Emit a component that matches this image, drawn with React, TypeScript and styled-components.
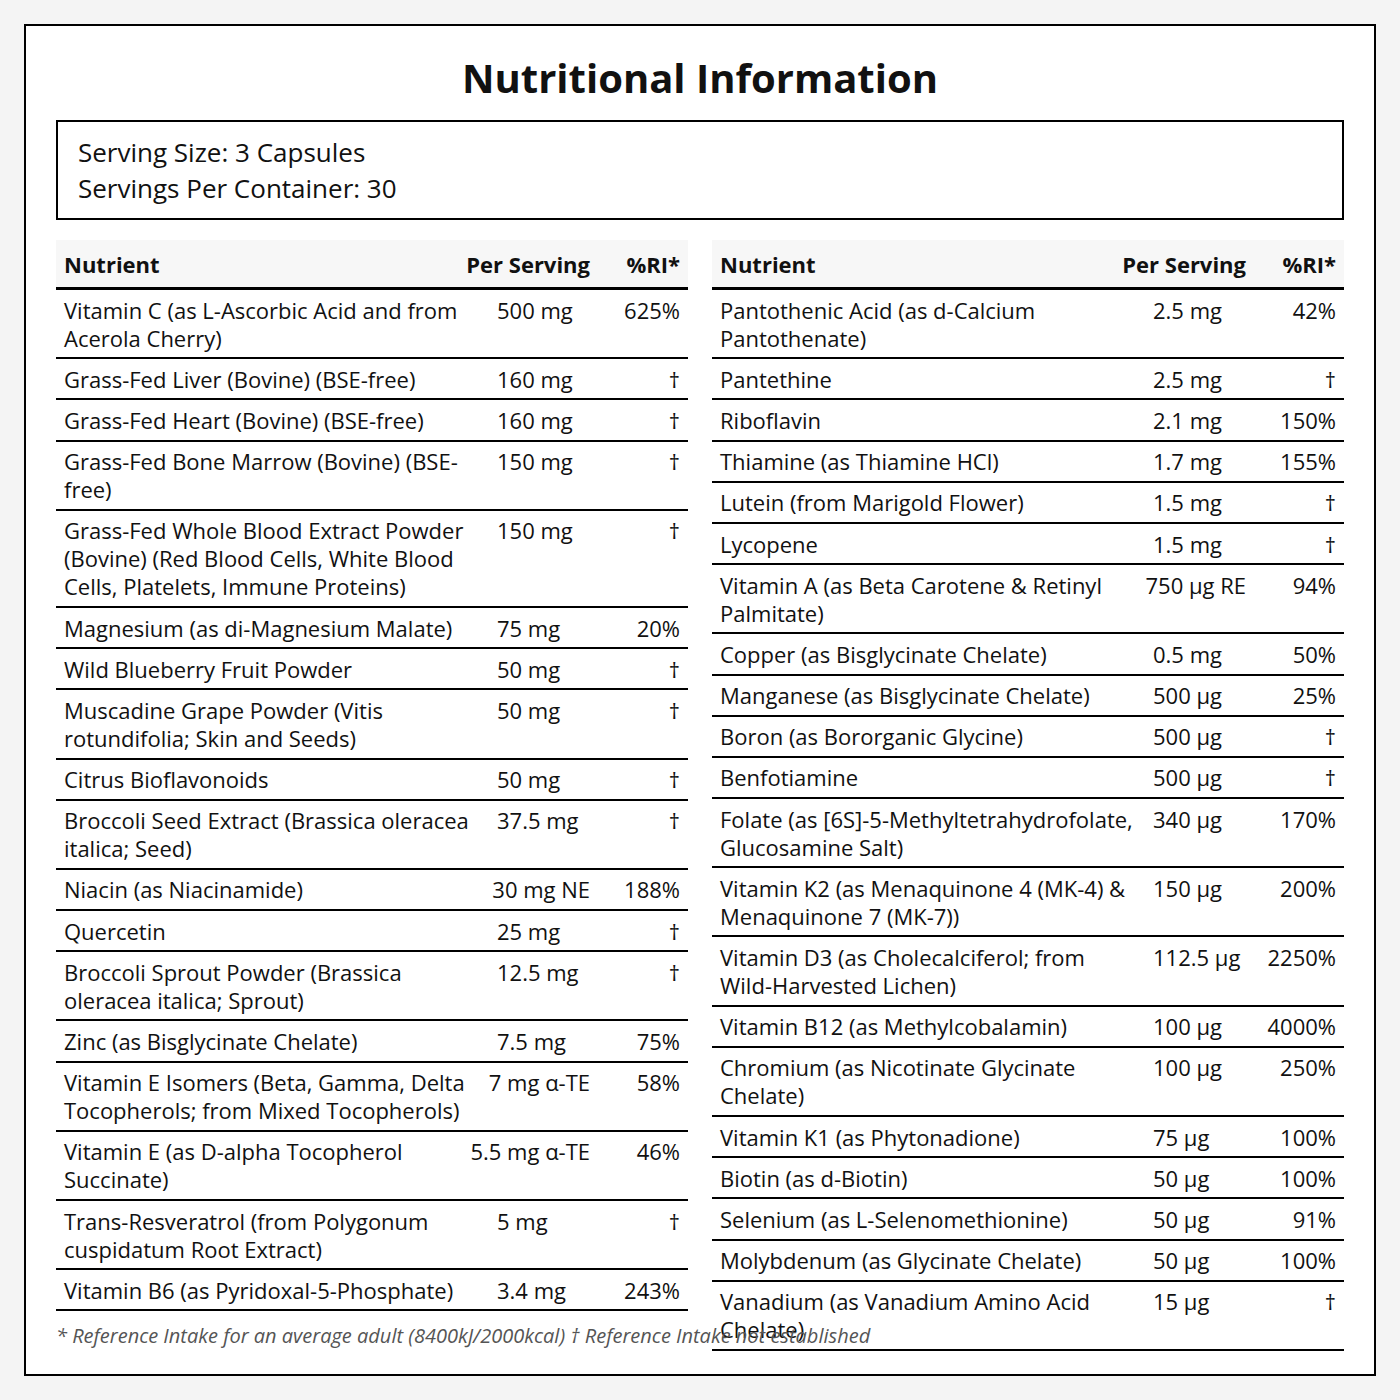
import React from 'react';
import styled, {createGlobalStyle} from 'styled-components';

const GlobalStyle = createGlobalStyle`
  html, body {
    margin: 0;
    padding: 0;
  }
  body {
    background: #f4f4f4;
    font-family: "Open Sans", "Noto Sans", sans-serif;
    color: #111;
  }
`

const Page = styled.div`
  padding: 24px;
`

const Card = styled.div`
  box-sizing: border-box;
  height: 1352px;
  background: #fff;
  border: 2px solid #000;
  padding: 30px;
`

const Title = styled.h1`
  margin: 0 0 20px;
  text-align: center;
  font-size: 40px;
  line-height: 44px;
  font-weight: 700;
`

const ServingBox = styled.div`
  border: 2px solid #000;
  padding: 12px 20px;
  font-size: 26px;
  line-height: 36px;
`

const Tables = styled.div`
  display: grid;
  grid-template-columns: 1fr 1fr;
  column-gap: 24px;
  align-items: start;
  margin-top: 20px;
  height: 1072px;
`

const Table = styled.div`
  font-size: 22px;
  line-height: 28px;
`

const HeadRow = styled.div`
  display: flex;
  align-items: flex-start;
  background: #f7f7f7;
  border-bottom: 3px solid #000;
  padding: 10px 0 9px;
  font-weight: 700;
`

const Row = styled.div`
  display: flex;
  align-items: flex-start;
  padding: 5.6px 0;
  border-bottom: 2px solid #000;
`

const NameCell = styled.div`
  flex: 1;
  min-width: 0;
  padding: 0 8px;
`

const AmountCell = styled.div`
  flex: none;
  min-width: 93px;
  padding: 0 8px;
  white-space: nowrap;
`

const RiCell = styled.div`
  flex: none;
  box-sizing: border-box;
  width: 90px;
  padding: 0 8px;
  text-align: right;
  white-space: nowrap;
`

const Footnote = styled.p`
  margin: 10px 0 0;
  font-size: 20px;
  line-height: 28px;
  font-style: italic;
  color: #555;
`

type Item = [string, string, string];

const left: Item[] = [
    ['Vitamin C (as L-Ascorbic Acid and from Acerola Cherry)', '500 mg', '625%'],
    ['Grass-Fed Liver (Bovine) (BSE-free)', '160 mg', '†'],
    ['Grass-Fed Heart (Bovine) (BSE-free)', '160 mg', '†'],
    ['Grass-Fed Bone Marrow (Bovine) (BSE-free)', '150 mg', '†'],
    ['Grass-Fed Whole Blood Extract Powder (Bovine) (Red Blood Cells, White Blood Cells, Platelets, Immune Proteins)', '150 mg', '†'],
    ['Magnesium (as di-Magnesium Malate)', '75 mg', '20%'],
    ['Wild Blueberry Fruit Powder', '50 mg', '†'],
    ['Muscadine Grape Powder (Vitis rotundifolia; Skin and Seeds)', '50 mg', '†'],
    ['Citrus Bioflavonoids', '50 mg', '†'],
    ['Broccoli Seed Extract (Brassica oleracea italica; Seed)', '37.5 mg', '†'],
    ['Niacin (as Niacinamide)', '30 mg NE', '188%'],
    ['Quercetin', '25 mg', '†'],
    ['Broccoli Sprout Powder (Brassica oleracea italica; Sprout)', '12.5 mg', '†'],
    ['Zinc (as Bisglycinate Chelate)', '7.5 mg', '75%'],
    ['Vitamin E Isomers (Beta, Gamma, Delta Tocopherols; from Mixed Tocopherols)', '7 mg α-TE', '58%'],
    ['Vitamin E (as D-alpha Tocopherol Succinate)', '5.5 mg α-TE', '46%'],
    ['Trans-Resveratrol (from Polygonum cuspidatum Root Extract)', '5 mg', '†'],
    ['Vitamin B6 (as Pyridoxal-5-Phosphate)', '3.4 mg', '243%'],
]

const right: Item[] = [
    ['Pantothenic Acid (as d-Calcium Pantothenate)', '2.5 mg', '42%'],
    ['Pantethine', '2.5 mg', '†'],
    ['Riboflavin', '2.1 mg', '150%'],
    ['Thiamine (as Thiamine HCl)', '1.7 mg', '155%'],
    ['Lutein (from Marigold Flower)', '1.5 mg', '†'],
    ['Lycopene', '1.5 mg', '†'],
    ['Vitamin A (as Beta Carotene & Retinyl Palmitate)', '750 µg RE', '94%'],
    ['Copper (as Bisglycinate Chelate)', '0.5 mg', '50%'],
    ['Manganese (as Bisglycinate Chelate)', '500 µg', '25%'],
    ['Boron (as Bororganic Glycine)', '500 µg', '†'],
    ['Benfotiamine', '500 µg', '†'],
    ['Folate (as [6S]-5-Methyltetrahydrofolate, Glucosamine Salt)', '340 µg', '170%'],
    ['Vitamin K2 (as Menaquinone 4 (MK-4) & Menaquinone 7 (MK-7))', '150 µg', '200%'],
    ['Vitamin D3 (as Cholecalciferol; from Wild-Harvested Lichen)', '112.5 µg', '2250%'],
    ['Vitamin B12 (as Methylcobalamin)', '100 µg', '4000%'],
    ['Chromium (as Nicotinate Glycinate Chelate)', '100 µg', '250%'],
    ['Vitamin K1 (as Phytonadione)', '75 µg', '100%'],
    ['Biotin (as d-Biotin)', '50 µg', '100%'],
    ['Selenium (as L-Selenomethionine)', '50 µg', '91%'],
    ['Molybdenum (as Glycinate Chelate)', '50 µg', '100%'],
    ['Vanadium (as Vanadium Amino Acid Chelate)', '15 µg', '†'],
]

const NutrientTable = ({items}: { items: Item[] }) => (
    <Table>
        <HeadRow>
            <NameCell>Nutrient</NameCell>
            <AmountCell>Per Serving</AmountCell>
            <RiCell>%RI*</RiCell>
        </HeadRow>
        {items.map(([name, amount, ri]) => (
            <Row key={name}>
                <NameCell>{name}</NameCell>
                <AmountCell>{amount}</AmountCell>
                <RiCell>{ri}</RiCell>
            </Row>
        ))}
    </Table>
)

export default function App() {
    return (
        <Page>
            <GlobalStyle/>
            <Card>
                <Title>Nutritional Information</Title>
                <ServingBox>
                    <div>Serving Size: 3 Capsules</div>
                    <div>Servings Per Container: 30</div>
                </ServingBox>
                <Tables>
                    <NutrientTable items={left}/>
                    <NutrientTable items={right}/>
                </Tables>
                <Footnote>
                    * Reference Intake for an average adult (8400kJ/2000kcal) † Reference Intake not established
                </Footnote>
            </Card>
        </Page>
    );
}
